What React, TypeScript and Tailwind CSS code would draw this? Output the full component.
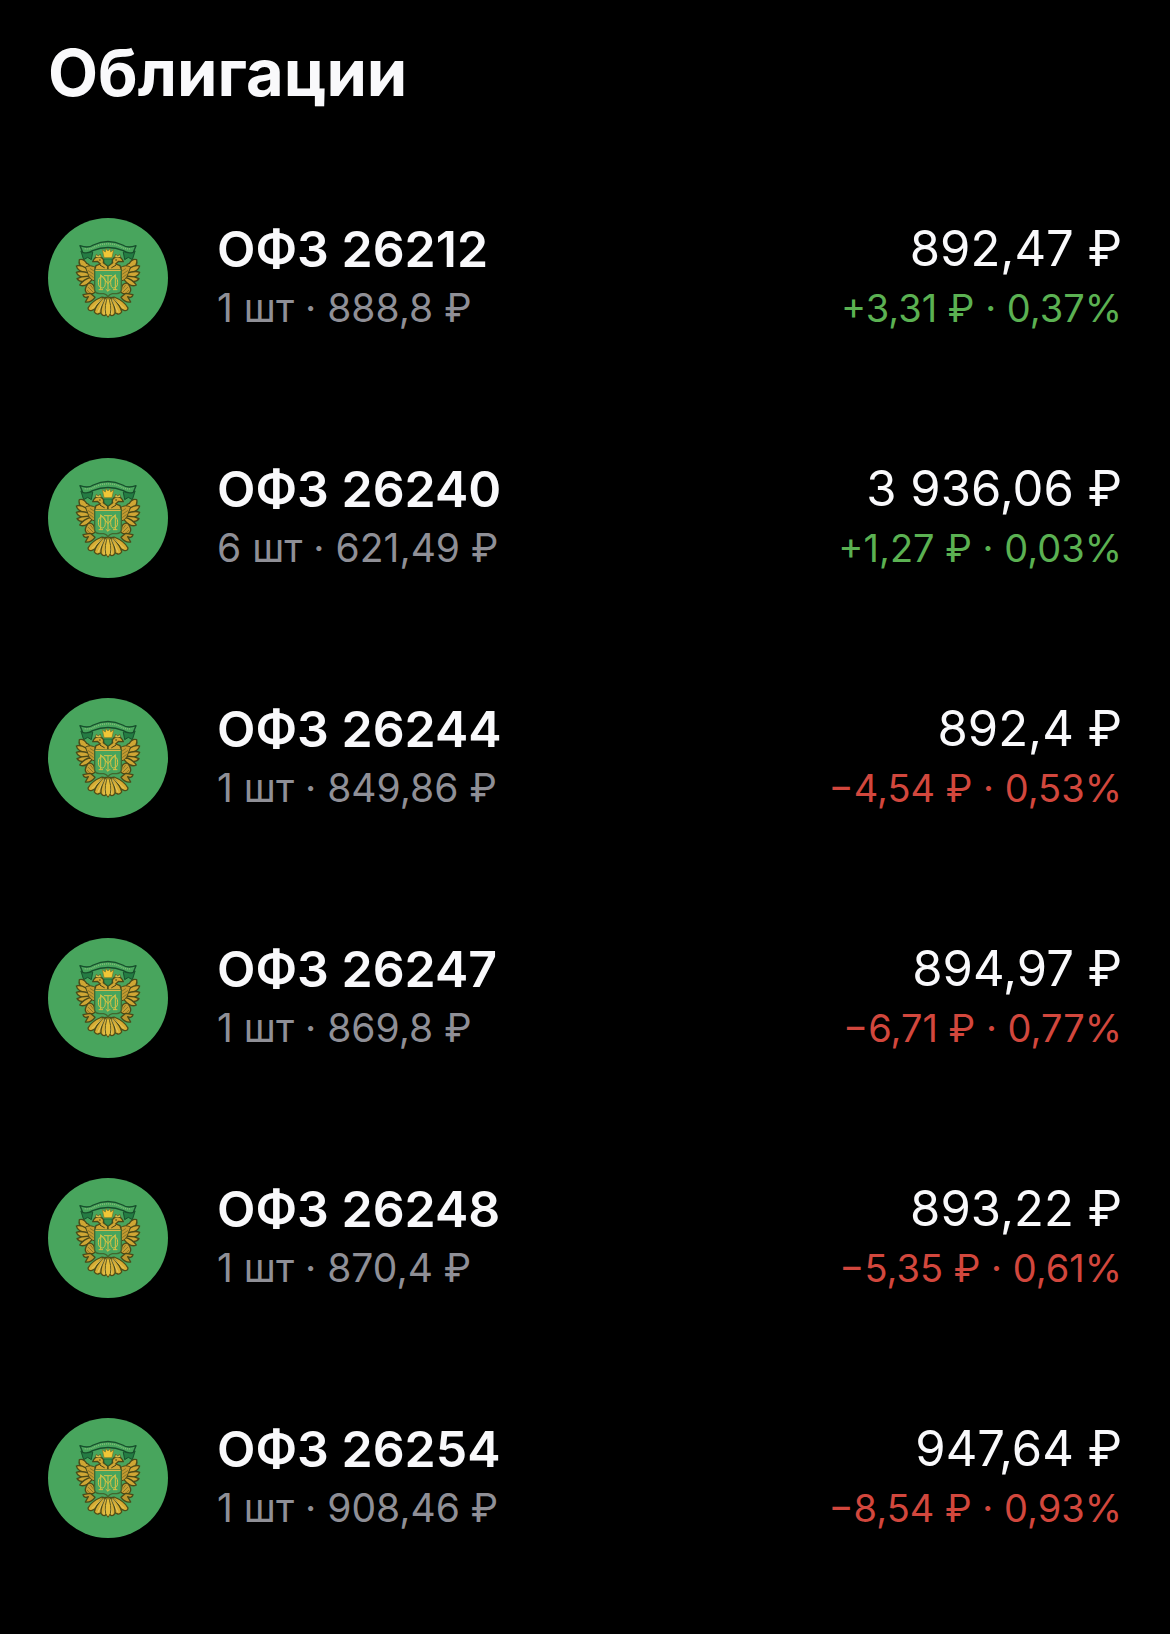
type Bond = {
  name: string;
  amount: string;
  total: string;
  change: string;
  up: boolean;
};

const bonds: Bond[] = [
  { name: 'ОФЗ 26212', amount: '1 шт · 888,8 ₽', total: '892,47 ₽', change: '+3,31 ₽ · 0,37%', up: true },
  { name: 'ОФЗ 26240', amount: '6 шт · 621,49 ₽', total: '3 936,06 ₽', change: '+1,27 ₽ · 0,03%', up: true },
  { name: 'ОФЗ 26244', amount: '1 шт · 849,86 ₽', total: '892,4 ₽', change: '−4,54 ₽ · 0,53%', up: false },
  { name: 'ОФЗ 26247', amount: '1 шт · 869,8 ₽', total: '894,97 ₽', change: '−6,71 ₽ · 0,77%', up: false },
  { name: 'ОФЗ 26248', amount: '1 шт · 870,4 ₽', total: '893,22 ₽', change: '−5,35 ₽ · 0,61%', up: false },
  { name: 'ОФЗ 26254', amount: '1 шт · 908,46 ₽', total: '947,64 ₽', change: '−8,54 ₽ · 0,93%', up: false },
];

// left half of the eagle, mirrored for the right half
function EagleHalf() {
  return (
    <g strokeLinejoin="round" strokeLinecap="round">
      {/* ribbon tail */}
      <path d="M123 124 L131 149 L143 142 L154 149 L158 127 Z" fill="#247c43" stroke="#174f2c" strokeWidth="3" />
      {/* wing feathers */}
      <g fill="#cfa634" stroke="#4a4a18" strokeWidth="4">
        <path d="M137 181 Q113 166 118 149 Q131 145 140 160 Q149 162 154 177 Z" />
        <path d="M144 191 Q112 184 109 168 Q121 163 138 174 L152 184 Z" />
        <path d="M149 202 Q114 204 109 187 Q123 181 149 190 Z" />
        <path d="M152 210 Q121 221 111 206 Q127 197 151 199 Z" />
        <path d="M156 209 Q136 234 119 225 Q130 208 155 201 Z" />
      </g>
      <path d="M137 171 Q151 162 169 174 L165 213 Q149 210 144 192 Z" fill="#c49a30" stroke="#4a4a18" strokeWidth="3" />
      <path d="M145 182 L160 192 M151 176 L162 183 M149 194 L160 202" stroke="#6b631f" strokeWidth="2" fill="none" />
      {/* head and neck */}
      <path d="M158 155 Q164 138 180 141 Q194 145 190 158 L204 169 L204 181 L164 179 L168 167 L181 162 L172 154 Z" fill="#cfa634" stroke="#4a4a18" strokeWidth="4" />
      <path d="M166 141 L169 133 L175 138 L181 132 L184 142" fill="#d9bd4a" stroke="#54591c" strokeWidth="2" />
      <path d="M178 150 h3 M181 166 L193 173" stroke="#403f1a" strokeWidth="3" />
      {/* leg */}
      <path d="M143 222 Q152 215 161 226 L167 246 Q150 258 139 248 Q131 239 143 222 Z" fill="#c79e33" stroke="#4a4a18" strokeWidth="4" />
      <path d="M145 232 L158 245 M151 225 L161 238 M142 241 L150 250" stroke="#6b631f" strokeWidth="2" />
      <path d="M129 254 Q133 266 145 260 L136 276 Q154 278 165 262 L151 250 Z" fill="#be982f" stroke="#4a4a18" strokeWidth="4" />
      {/* tail feathers */}
      <g fill="#d6ad33" stroke="#4f4d19" strokeWidth="4">
        <path d="M186 261 Q155 273 144 294 Q145 304 156 301 Q164 299 170 292 L192 265 Z" />
        <path d="M191 262 Q166 288 163 306 Q168 314 175 312 Q183 310 187 303 L198 266 Z" />
        <path d="M197 262 Q181 291 183 310 Q189 319 195 316 Q200 313 202 309 L204 263 Z" />
      </g>
      <path d="M187 267 L156 295 M192 270 L174 306 M198 269 L192 312" stroke="#efd87b" strokeWidth="2" />
    </g>
  );
}

function Emblem() {
  return (
    <svg viewBox="24 24 360 360" className="size-30 shrink-0" aria-hidden="true">
      <circle cx="204" cy="204" r="180" fill="#48a55d" />
      <EagleHalf />
      <g transform="translate(408 0) scale(-1 1)">
        <EagleHalf />
      </g>
      {/* centre feather */}
      <path d="M204 257 Q192 289 197 311 L204 322 L211 311 Q216 289 204 257 Z" fill="#e3bd3d" stroke="#5a551a" strokeWidth="3" />
      {/* ribbon */}
      <path
        d="M120 107 Q145 116 160 105 Q204 84 248 105 Q263 116 288 107 L280 127 Q264 132 250 122 Q204 103 158 122 Q144 132 128 127 Z"
        fill="#46a45b"
        stroke="#174f2c"
        strokeWidth="4"
        strokeLinejoin="round"
      />
      <path d="M134 116 Q151 119 165 110 Q204 93 243 110 Q257 119 274 116" fill="none" stroke="#8bbf79" strokeWidth="4" strokeDasharray="3 3" />
      {/* crown and collar */}
      <path d="M192 143 L187 119 L196 126 L198 116 L204 123 L210 116 L212 126 L221 119 L216 143 Z" fill="#f0c637" stroke="#77732a" strokeWidth="2" />
      <path d="M192 147 H216 Q218 161 204 167 Q190 161 192 147 Z" fill="#368f4d" stroke="#225e32" strokeWidth="2" />
      {/* shield */}
      <path d="M164 180 H244 V239 Q243 250 230 251 H217 Q208 253 204 260 Q200 253 191 251 H178 Q165 250 164 239 Z" fill="#48a55d" stroke="#42672f" strokeWidth="4" />
      <path d="M166 181 H242" stroke="#d7b646" strokeWidth="4" />
      {/* monogram */}
      <g fill="none" stroke="#d9c244" strokeWidth="3">
        <path d="M182 239 V194 L204 221 L226 194 V239" />
        <path d="M188 200 Q175 199 175 217 Q175 234 188 234 Q196 233 196 217 Q196 201 188 200 Z" />
        <path d="M220 200 Q233 199 233 217 Q233 234 220 234 Q212 233 212 217 Q212 201 220 200 Z" />
        <path d="M192 197 H216 M204 197 V243 M197 237 L204 244 L211 237 M176 239 H189 M219 239 H232" />
      </g>
    </svg>
  );
}

function BondRow({ bond }: { bond: Bond }) {
  return (
    <li className="flex items-start py-15">
      <Emblem />
      <div className="ml-[49px] flex flex-1 justify-between whitespace-nowrap">
        <div>
          <h2 className="text-[50px] leading-[62px] font-semibold">{bond.name}</h2>
          <p className="text-[39px] leading-[56px] text-[#8f8f96]">{bond.amount}</p>
        </div>
        <div className="text-right">
          <p className="text-[49px] leading-[62px]">{bond.total}</p>
          <p className={bond.up ? 'text-[38px] leading-[56px] text-[#5bb152]' : 'text-[38px] leading-[56px] text-[#d2473d]'}>
            {bond.change}
          </p>
        </div>
      </div>
    </li>
  );
}

export default function App() {
  return (
    <main className="min-h-screen w-full bg-black px-12 pt-9 pb-9 font-['Inter',sans-serif] text-[#f9f9fb]">
      <h1 className="text-[65px] leading-[74px] font-bold">Облигации</h1>
      <ul className="mt-12">
        {bonds.map((bond) => (
          <BondRow key={bond.name} bond={bond} />
        ))}
      </ul>
    </main>
  );
}
